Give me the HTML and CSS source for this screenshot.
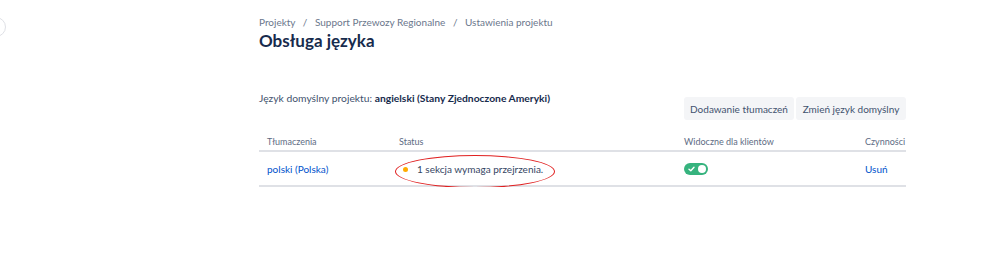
FILE: index.html
```html
<!DOCTYPE html>
<html lang="pl">
<head>
    <meta charset="UTF-8">
    <meta name="viewport" content="width=device-width, initial-scale=1.0">
    <title>Obsługa języka</title>
    <link rel="stylesheet" href="styles.css">
</head>
<body>

    <!-- Sidebar collapse handle, cut off by the window edge -->
    <div class="side-handle"></div>

    <div class="page">
        <!-- Breadcrumbs -->
        <nav class="breadcrumbs">
            <a href="#">Projekty</a>
            <span class="sep">/</span>
            <a href="#">Support Przewozy Regionalne</a>
            <span class="sep">/</span>
            <a href="#">Ustawienia projektu</a>
        </nav>

        <h1>Obsługa języka</h1>

        <div class="toolbar">
            <p class="default-lang">Język domyślny projektu: <strong>angielski (Stany Zjednoczone Ameryki)</strong></p>
            <div class="actions">
                <button class="btn">Dodawanie tłumaczeń</button>
                <button class="btn">Zmień język domyślny</button>
            </div>
        </div>

        <!-- Translations table -->
        <table class="translations">
            <thead>
                <tr>
                    <th class="col-lang">Tłumaczenia</th>
                    <th class="col-status">Status</th>
                    <th class="col-visible">Widoczne dla klientów</th>
                    <th class="col-actions">Czynności</th>
                </tr>
            </thead>
            <tbody>
                <tr>
                    <td><a href="#">polski (Polska)</a></td>
                    <td>
                        <span class="status">
                            <span class="dot"></span>1 sekcja wymaga przejrzenia.
                            <span class="highlight"></span>
                        </span>
                    </td>
                    <td>
                        <span class="toggle">
                            <svg class="check" width="7" height="6" viewBox="0 0 7 6">
                                <path d="M1 3.2 L2.8 4.8 L6 1.2" fill="none" stroke="#fff" stroke-width="1.4" stroke-linecap="round" stroke-linejoin="round"/>
                            </svg>
                            <span class="knob"></span>
                        </span>
                    </td>
                    <td class="col-actions"><a href="#">Usuń</a></td>
                </tr>
            </tbody>
        </table>
    </div>

</body>
</html>
```

FILE: styles.css
```css
/* Basic styles */
body {
    font-family: 'Lato', 'Noto Sans', sans-serif;
    background-color: #ffffff;
    color: #172b4d;
    margin: 0;
    padding: 0;
}

a {
    color: #0052cc;
    text-decoration: none;
}

.side-handle {
    position: absolute;
    left: -14px;
    top: 17px;
    width: 18px;
    height: 18px;
    border-radius: 50%;
    border: 1px solid #dfe1e6;
    background: #fff;
}

.page {
    width: 647px;
    margin-left: 259px;
    padding-top: 14px;
}

/* Breadcrumbs */
.breadcrumbs {
    font-size: 10px;
    line-height: 16px;
    color: #6b778c;
}

.breadcrumbs a {
    color: #6b778c;
}

.breadcrumbs .sep {
    margin: 0 5px;
}

h1 {
    font-size: 17px;
    font-weight: 700;
    line-height: 22px;
    margin: 0;
    color: #172b4d;
}

/* Toolbar */
.toolbar {
    display: flex;
    justify-content: space-between;
    align-items: flex-start;
    margin-top: 38px;
}

.default-lang {
    margin: 0;
    font-size: 10.3px;
    line-height: 16px;
    color: #42526e;
}

.default-lang strong {
    font-weight: 700;
    color: #172b4d;
}

.actions {
    display: flex;
    flex: none;
    gap: 2px;
    margin-top: 7px;
}

.btn {
    flex: none;
    box-sizing: border-box;
    font-family: inherit;
    font-size: 10px;
    width: 110px;
    height: 23px;
    padding: 0;
    white-space: nowrap;
    border: none;
    border-radius: 3px;
    background-color: #f4f5f7;
    color: #42526e;
}

/* Table */
.translations {
    width: 100%;
    table-layout: fixed;
    border-collapse: collapse;
    margin-top: 11px;
    font-size: 10px;
}

.translations th {
    text-align: left;
    font-weight: 400;
    font-size: 9px;
    line-height: 12px;
    color: #5e6c84;
    padding: 5px 8px 2px;
    border-bottom: 2px solid #dfe1e6;
    white-space: nowrap;
}

.translations td {
    padding: 0 8px;
    height: 33px;
    border-bottom: 2px solid #dfe1e6;
    color: #344563;
}

.translations .col-actions {
    padding-right: 0;
}

.col-lang { width: 116px; }
.col-status { width: 269px; }
.col-visible { width: 165px; }

.status {
    position: relative;
    display: inline-flex;
    align-items: center;
    padding-left: 4px;
}

.dot {
    width: 5px;
    height: 5px;
    border-radius: 50%;
    background-color: #ffab00;
    margin-right: 9px;
}

/* Red marker drawn round the status */
.highlight {
    position: absolute;
    left: -4px;
    top: -8px;
    width: 158px;
    height: 31px;
    border: 1.5px solid #e02020;
    border-radius: 50%;
}

.toggle {
    position: relative;
    display: inline-flex;
    align-items: center;
    width: 24px;
    height: 12px;
    border-radius: 6px;
    background-color: #36b37e;
    vertical-align: middle;
}

.toggle .check {
    position: absolute;
    left: 4px;
    top: 3px;
}

.toggle .knob {
    position: absolute;
    right: 2px;
    top: 2px;
    width: 8px;
    height: 8px;
    border-radius: 50%;
    background-color: #fff;
}
```
